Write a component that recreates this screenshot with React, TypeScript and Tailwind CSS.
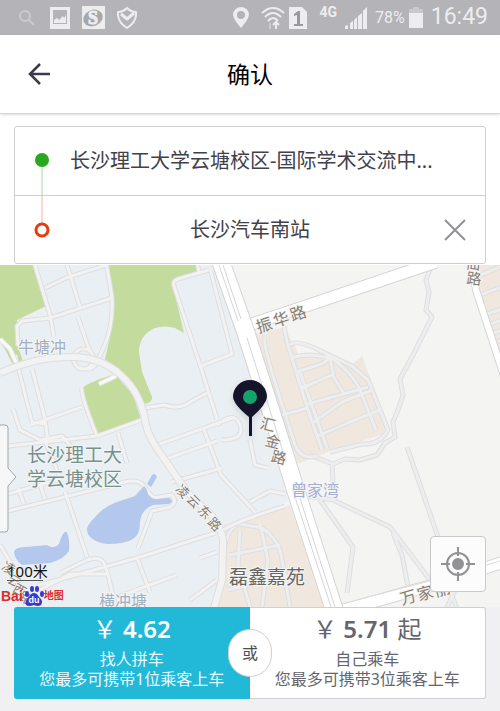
const minorRoads = [
  "M34 262 L50 315 L54 337",
  "M45 288 L66 278 L106 265",
  "M66 262 L80 307",
  "M18 346 L17 326 L22 321 L50 318 L112 298",
  "M106 262 L112 297 Q114 334 96 362",
  "M78 317 L90 352",
  "M83 349 a10 10 0 1 0 1 0 M84 368 Q92 372 99 360",
  "M32 369 L45 419 L48 442",
  "M15 355 L32 422 L45 424",
  "M30 425 L82 407",
  "M82 388 Q80 394 97 436",
  "M97 436 L144 419",
  "M145 408 L164 405 Q180 410 190 402 L207 393",
  "M209 270 L178 279 Q172 281 174 286 L200 365 L217 419",
  "M197 262 L199 272",
  "M211 272 L232 354 L201 366",
  "M157 445 L235 417",
  "M203 427 L221 475 L255 512",
  "M163 460 L217 441",
  "M172 482 L222 468",
  "M118 433 L127 463",
  "M0 447 L97 436",
  "M13 409 L20 430 L40 440 L62 436 L74 450",
  "M45 440 L60 478",
  "M0 513 L125 482 Q138 479 144 486",
  "M0 496 L58 480",
  "M18 488 L24 504 M40 484 L45 499",
  "M65 492 L87 557",
  "M60 573 L87 560 Q100 556 104 563 L108 575 L117 612",
  "M40 590 L70 574 L108 574",
  "M40 585 L137 558 L215 533",
  "M137 558 L150 592",
  "M120 596 L177 575",
  "M144 486 L153 498 L172 495 Q178 502 170 507 L152 511 L145 530 L138 548",
  "M200 558 L217 552",
  "M190 600 L217 580",
  "M0 545 L18 575 L26 607",
  "M250 502 L270 491 L285 494",
  "M250 440 L255 465 L268 468",
  "M217 425 Q235 410 240 425 T222 440",
];

const openRoads = [
  "M431 266 L426 280 L429 292 L426 310 L432 317 L424 333 L413 355 L400 379 L403 395 L398 410 L393 422 L395 437 L385 443 L377 455 L360 460 L345 459 L333 464 L310 455",
  "M332 463 L333 483",
  "M407 447 L438 537",
  "M307 496 L333 500 L390 527 L430 580",
  "M320 500 L353 547 L347 593",
  "M393 533 L402 555 L408 587",
  "M450 590 L458 612 M445 612 L455 590",
];

const estateRoads = [
  "M265 338 Q262 342 280 398 L295 445 Q300 460 318 456",
  "M284 326 L287 342 L308 410 L322 450",
  "M290 345 Q296 338 325 353 L352 366 L368 380 L388 430 Q380 445 362 444 L330 452",
  "M290 358 Q310 352 328 358",
  "M296 372 L322 364 L330 358 L334 378 L345 395",
  "M302 388 L332 375",
  "M308 404 L368 387",
  "M314 422 L342 402 L372 390",
  "M318 436 L350 422 L380 410",
  "M300 372 L327 448",
  "M325 353 Q352 372 359 388 L376 430",
  "M282 415 L308 408",
];

const southRoads = [
  "M225 545 Q230 525 240 524 L262 528 Q280 540 282 560 L290 607",
  "M260 524 L268 560 L262 607",
  "M230 555 L280 545",
  "M228 590 L288 575",
  "M240 530 L238 565 L250 607",
  "M480 295 L502 287 M484 315 L502 309 M488 325 L502 320 M491 334 L502 330 M481 275 L502 266 M494 343 L502 340",
];

function Roads({ paths, width = 3, fill = "#f2f2f3", edge = "#dddee1" }: {
  paths: string[];
  width?: number;
  fill?: string;
  edge?: string;
}) {
  const d = paths.join(" ");
  return (
    <g fill="none" strokeLinejoin="round">
      <path d={d} stroke={edge} strokeWidth={width + 2} />
      <path d={d} stroke={fill} strokeWidth={width} />
    </g>
  );
}

type Glyph = [char: string, x: number, y: number];

function StreetName({ glyphs, angle, size }: { glyphs: Glyph[]; angle: number; size: number }) {
  return (
    <g
      fill="#857d74"
      stroke="#f6f5f3"
      strokeWidth="2"
      paintOrder="stroke"
      fontSize={size}
      textAnchor="middle"
      dominantBaseline="central"
    >
      {glyphs.map(([char, x, y]) => (
        <text key={char} transform={`translate(${x} ${y}) rotate(${angle})`}>
          {char}
        </text>
      ))}
    </g>
  );
}

function MapCanvas() {
  return (
    <svg
      viewBox="0 265 500 342"
      preserveAspectRatio="xMidYMid slice"
      className="block h-full w-full"
      aria-label="地图"
    >
      <rect y="265" width="500" height="342" fill="#f4f4f3" />
      <path d="M0 265 H215 L246 330 L291 500 L222 527 V607 H0Z" fill="#e9eff2" />
      <path d="M222 525 L290 505 L325 607 H216 L224 570Z" fill="#f0e8de" />
      <path
        d="M252 333 L283 328 L292 341 L350 366 L362 356 L386 420 L384 434 L333 450 L298 464Z"
        fill="#f0e8de"
      />
      <path d="M478 265 H500 V355 L478 290Z" fill="#f0e8de" />
      <path d="M294 343 Q312 345 322 354 L298 354Z" fill="#f4f4f3" />

      <g fill="#c3db9d">
        <path d="M0 265 H34 L46 306 L17 320 L16 340 L23 362 L13 365 L5 349 L0 342Z" />
        <path d="M106 265 H197 V274 L172 282 L184 333 L175 328 Q165 325 155 328 Q139 335 139 352 L142 372 L152 397 Q153 402 145 404 L133 383 L117 369 L105 359 L112 329 L113 295Z" />
        <path d="M83 388 Q84 384 115 374 L133 395 L141 419 L100 434 L94 432Z" />
      </g>

      <Roads paths={minorRoads} />
      <Roads paths={openRoads} fill="#ededee" />
      <Roads paths={estateRoads} fill="#eeeeef" />
      <Roads paths={southRoads} fill="#eeeeef" />
      <Roads paths={["M0 339 L10 349 L18 367", "M99 384 L116 376"]} fill="#fafafa" edge="#e6e8e8" />
      <Roads
        paths={[
          "M0 373 C30 360 50 357 72 357 C112 357 139 385 145 420 Q147 436 163 457 L187 492 L213 517 Q224 532 223 545 L222 580 L213 612",
        ]}
        width={6}
      />
      <Roads paths={["M223 530 Q240 520 285 506"]} />

      <g fill="#b4c8ee">
        <path d="M87 530 Q86 526 97 515 Q105 506 117 502 L135 496 L144 486 Q147 488 148 494 Q152 500 158 499 L169 498 Q175 501 169 504 L153 505 Q141 510 140 522 Q140 535 133 539 Q125 544 107 544 Q88 541 87 530Z" />
        <path d="M147 484 L152 475 Q155 472 157 477 L151 487Z" />
        <path d="M14 552 Q15 547 26 547 L47 545 Q54 550 59 544 Q63 530 67 532 Q70 540 69 551 Q64 559 50 563 L22 565 Q15 560 14 552Z" />
      </g>

      <Roads
        paths={["M246 326 L306 306 L436 262", "M322 616 L430 586 L510 560"]}
        width={11}
        fill="#ffffff"
        edge="#d5d5d7"
      />
      <Roads paths={["M472 262 L476 290 L504 376"]} width={6} fill="#ffffff" edge="#d5d5d7" />
      <Roads
        paths={["M221 262 L245 330 L277 430 L295 488 L335 612"]}
        width={17}
        fill="#ffffff"
        edge="#d5d5d7"
      />
      <path
        d="M219 265 L238 321 M223 265 L241 319 M247 338 L286 461 M292 488 L331 607 M296 486 L335 607"
        fill="none"
        stroke="#d5d5d7"
      />
      <path d="M360 599 L430 581 L500 561" fill="none" stroke="#dddddf" />
      <path d="M237 325 L247 321 L252 332 L242 335Z" fill="#ffffff" />

      <StreetName size={16} angle={-18} glyphs={[["振", 264, 325], ["华", 281, 319], ["路", 298, 313]]} />
      <StreetName size={15} angle={14} glyphs={[["汇", 268, 424], ["金", 273, 441], ["路", 279, 457]]} />
      <StreetName
        size={13}
        angle={45}
        glyphs={[["凌", 183, 491], ["云", 194, 501], ["东", 205, 512], ["路", 215, 524]]}
      />
      <StreetName size={16} angle={-16} glyphs={[["万", 408, 597], ["家", 425, 593], ["丽", 442, 589]]} />
      <StreetName size={15} angle={6} glyphs={[["仙", 473, 263], ["路", 474, 278]]} />
      <StreetName
        size={13}
        angle={30}
        glyphs={[["凌", 9, 568], ["云", 15, 581], ["西", 20, 590], ["路", 26, 598]]}
      />

      <g stroke="#f3f6f6" strokeWidth="2" paintOrder="stroke">
        <g fill="#a3aec0" fontSize="16">
          <text x="18" y="353">牛塘冲</text>
          <text x="99" y="607">横冲塘</text>
        </g>
        <text x="291" y="496" fontSize="16" fill="#a9add0">曾家湾</text>
        <g fill="#76908c" fontSize="19">
          <text x="27" y="462">长沙理工大</text>
          <text x="27" y="486">学云塘校区</text>
        </g>
        <text x="229" y="584" fontSize="19" fill="#6b645e">磊鑫嘉苑</text>
      </g>
    </svg>
  );
}

function StatusBar() {
  return (
    <div className="flex h-[35px] items-center justify-between bg-[#b3b3b8] pr-3 pl-4 font-[Roboto] text-[#ededf0]">
      <div className="flex items-center gap-3">
        <svg width="22" height="20" viewBox="0 0 22 20" fill="none" stroke="#cbcbcf" strokeWidth="2">
          <circle cx="9" cy="8" r="5" />
          <path d="M13 12 L18 17" />
        </svg>
        <svg width="20" height="22" viewBox="0 0 20 22">
          <path d="M0 0 H20 V22 H0Z M3 3 V17 H17 V3Z" fill="currentColor" fillRule="evenodd" />
          <path d="M4 16 V13 L7 11 L9 13 L13 9 L14 11 L16 8 V16Z" fill="currentColor" />
        </svg>
        <svg width="23" height="23" viewBox="0 0 23 23">
          <rect width="23" height="23" fill="currentColor" />
          <ellipse cx="11" cy="12" rx="10" ry="8" fill="#a7a7ac" transform="rotate(-25 11 12)" />
          <text x="11" y="18" textAnchor="middle" fontSize="18" fontWeight="700" fontFamily="Liberation Serif, serif" fill="currentColor" stroke="currentColor">S</text>
        </svg>
        <svg width="20" height="22" viewBox="0 0 20 22" fill="none" stroke="currentColor" strokeWidth="2" strokeLinejoin="round">
          <path d="M10 1 Q14 5 19 5 Q20 15 10 21 Q0 15 1 5 Q6 5 10 1Z" />
          <path d="M4 7 L10 12 L17 6" strokeWidth="3" />
        </svg>
      </div>
      <div className="flex items-center">
        <svg width="16" height="21" viewBox="0 0 16 21" className="mr-3">
          <path d="M8 0 A8 8 0 0 1 16 8 Q15 13 8 21 Q1 13 0 8 A8 8 0 0 1 8 0Z M8 4 A4 4 0 1 0 8 12 A4 4 0 0 0 8 4Z" fill="currentColor" fillRule="evenodd" />
        </svg>
        <svg width="24" height="24" viewBox="0 0 24 24" fill="none" stroke="currentColor" strokeWidth="2" className="mr-1">
          <path d="M1 7 Q12 -3 23 7 M4 11 Q12 3 20 11 M7 15 Q12 9 17 15" />
          <path d="M15 23 V16 M12 19 L15 16 L18 19" />
          <path d="M9 17 V23" stroke="#cbcbcf" />
        </svg>
        <svg width="18" height="22" viewBox="0 0 18 22" className="mr-3">
          <path d="M0 0 H13 L18 5 V22 H0Z" fill="currentColor" />
          <path d="M5 7 L9 4 H11 V17 H14 V19 H5 V17 H8 V8 L5 9Z" fill="#98989d" />
        </svg>
        <span className="mr-2 h-7 text-sm leading-4 font-bold">4G</span>
        <svg width="22" height="22" viewBox="0 0 22 22" className="mr-2">
          <path d="M0 19 L3 18 V22 H0Z M5 16 L8 14 V22 H5Z M9 13 L12 10 V22 H9Z M13 9 L17 6 V22 H13Z M18 4 L22 0 V22 H18Z" fill="currentColor" />
        </svg>
        <span className="mr-1 text-base">78%</span>
        <svg width="14" height="21" viewBox="0 0 14 21" className="mr-2">
          <path d="M4 0 H10 V2 H14 V6 H0 V2 H4Z" fill="#c9c9cd" />
          <path d="M0 6 H14 V21 H0Z" fill="currentColor" />
        </svg>
        <span className="text-[23px]">16:49</span>
      </div>
    </div>
  );
}

function RouteCard() {
  return (
    <section className="relative mx-[14px] mt-3 rounded-[3px] border border-[#cfcfd1] bg-white text-xl text-[#41414c]">
      <svg width="16" height="86" viewBox="0 0 16 86" className="absolute top-[25px] left-[19px]">
        <path d="M8 8 V43" stroke="#a8d8a6" />
        <path d="M8 43 V72" stroke="#f3b5a5" />
        <circle cx="8" cy="8" r="7" fill="#2ba61f" />
        <circle cx="8" cy="78" r="6" fill="#fff" stroke="#e63a12" strokeWidth="3" />
      </svg>
      <div className="flex h-[69px] items-center border-b border-[#cfcfd1] pr-[52px] pl-[55px]">
        <p className="whitespace-nowrap">长沙理工大学云塘校区-国际学术交流中...</p>
      </div>
      <div className="relative flex h-[67px] items-center justify-center">
        <p>长沙汽车南站</p>
        <button type="button" aria-label="清除" className="absolute right-[19px]">
          <svg width="22" height="22" viewBox="0 0 22 22" stroke="#929296" strokeWidth="2" className="block">
            <path d="M1 1 L21 21 M21 1 L1 21" />
          </svg>
        </button>
      </div>
    </section>
  );
}

function BaiduMark() {
  return (
    <div className="absolute bottom-0 left-px flex items-center font-['Liberation_Sans','Noto_Sans_CJK_SC',sans-serif] font-bold text-[#de2b2b]">
      <span className="text-sm leading-4">Bai</span>
      <svg width="20" height="22" viewBox="0 0 20 22" fill="#3a3ad2" className="ml-px">
        <ellipse cx="3" cy="9" rx="2" ry="3" />
        <ellipse cx="8" cy="4" rx="2" ry="3" />
        <ellipse cx="13" cy="4" rx="2" ry="3" />
        <ellipse cx="18" cy="9" rx="2" ry="3" />
        <path d="M10 8 Q13 8 15 12 Q20 16 17 20 Q14 22 10 20 Q5 22 2 20 Q0 16 5 12 Q7 8 10 8Z" />
        <text x="10" y="18" textAnchor="middle" fontSize="9" fill="#fff">du</text>
      </svg>
      <span className="text-[10px] leading-4">地图</span>
    </div>
  );
}

function MapSection() {
  return (
    <section className="relative mt-px h-[342px] overflow-hidden">
      <MapCanvas />

      <svg width="34" height="57" viewBox="0 0 34 57" className="absolute top-[115px] left-1/2 -ml-[17px] drop-shadow-md">
        <path d="M17 0 A17 17 0 0 1 34 17 Q33 25 19 37 V56 H16 V37 Q1 25 0 17 A17 17 0 0 1 17 0Z" fill="#15142a" />
        <circle cx="17" cy="17" r="7" fill="#12a468" />
      </svg>

      <button type="button" aria-label="展开" className="absolute top-[159px] left-0">
        <svg width="17" height="109" viewBox="0 0 17 109" className="block">
          <path d="M-1 1 H5 Q8 1 8 4 V44 L16 53 L8 62 V105 Q8 108 5 108 H-1Z" fill="#f6f7f8" stroke="#a3a7aa" />
        </svg>
      </button>

      <div className="absolute bottom-[26px] left-[7px] text-[15px] leading-5 text-[#111]">100米</div>
      <div className="absolute bottom-[26px] left-[7px] h-px w-9 bg-[#555]" />
      <BaiduMark />

      <button
        type="button"
        aria-label="定位"
        className="absolute right-[14px] bottom-[15px] flex size-14 items-center justify-center rounded border border-[#c9c9cb] bg-[#fcfcfc]"
      >
        <svg width="34" height="34" viewBox="0 0 34 34" fill="none" stroke="#929294" strokeWidth="2">
          <circle cx="17" cy="17" r="11" />
          <circle cx="17" cy="17" r="5" fill="#929294" />
          <path d="M17 0 V9 M17 25 V34 M0 17 H9 M25 17 H34" />
        </svg>
      </button>
    </section>
  );
}

function FareOptions() {
  return (
    <section className="relative mx-[14px] flex text-center text-base leading-5">
      <button type="button" className="h-[92px] flex-1 rounded-l-[3px] bg-[#22b9d9] pb-2 whitespace-nowrap text-white">
        <span className="block text-2xl leading-10">
          ￥ <span className="font-semibold">4.62</span>
        </span>
        <span className="block text-[#eafaff]">找人拼车</span>
        <span className="block text-[#eafaff]">您最多可携带1位乘客上车</span>
      </button>
      <button
        type="button"
        className="h-[92px] flex-1 rounded-r-[3px] border border-l-0 border-[#cfcfd2] bg-white pb-2 whitespace-nowrap text-[#65656e]"
      >
        <span className="block text-2xl leading-10">
          ￥ <span className="font-semibold">5.71</span> 起
        </span>
        <span className="block">自己乘车</span>
        <span className="block">您最多可携带3位乘客上车</span>
      </button>
      <span className="absolute top-[22px] left-1/2 -ml-[22px] flex h-12 w-11 items-center justify-center rounded-full border border-[#cfcfd2] bg-white text-base text-[#4c4c54]">
        或
      </span>
    </section>
  );
}

export default function App() {
  return (
    <main className="min-h-screen bg-[#f0f0f3] font-['Noto_Sans','Noto_Sans_CJK_SC',sans-serif]">
      <StatusBar />
      <div className="bg-white">
        <header className="relative flex h-[79px] items-center justify-center border-b border-[#d6d6d6] bg-white shadow-sm">
          <button type="button" aria-label="返回" className="absolute left-7">
            <svg width="22" height="22" viewBox="0 0 22 22" fill="none" stroke="#3b3a4c" strokeWidth="2.5" className="block">
              <path d="M12 1 L2 11 L12 21 M2 11 H22" />
            </svg>
          </button>
          <h1 className="text-[23px] text-black">确认</h1>
        </header>
        <RouteCard />
        <MapSection />
      </div>
      <FareOptions />
    </main>
  );
}
